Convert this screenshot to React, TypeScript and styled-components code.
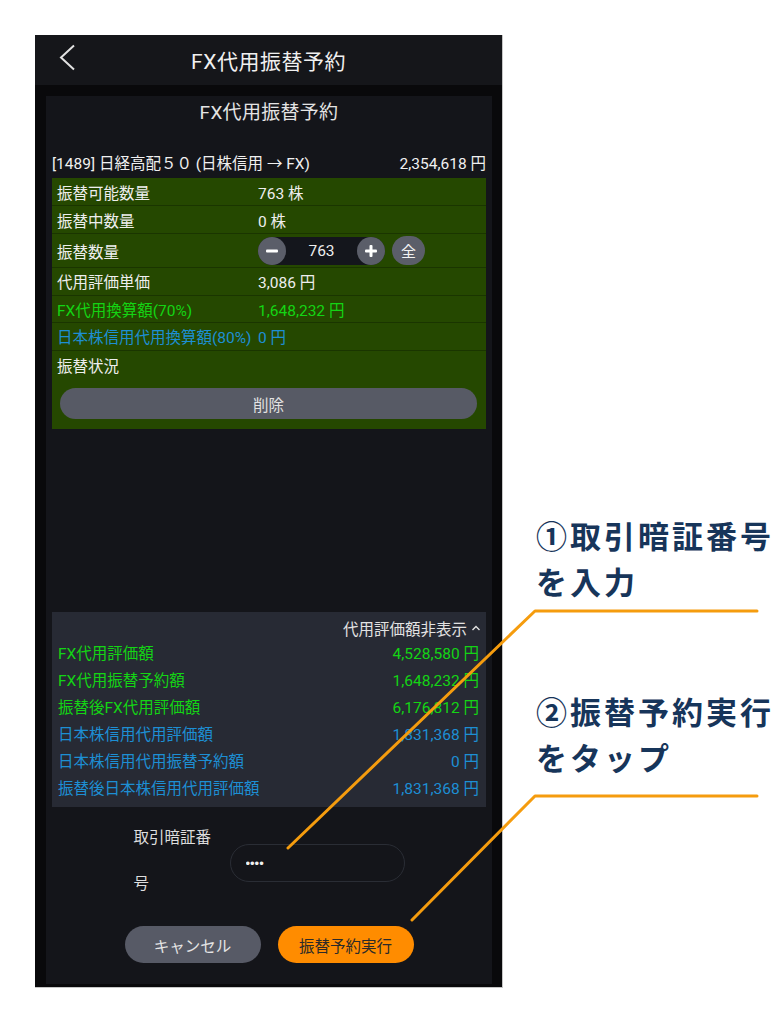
import React from "react";
import styled, { createGlobalStyle } from "styled-components";

const GlobalStyle = createGlobalStyle`
  html, body {
    margin: 0;
    padding: 0;
    background: #ffffff;
  }
  body {
    font-family: Roboto, "Noto Sans CJK JP", sans-serif;
  }
  * {
    box-sizing: border-box;
  }
`;

const GREEN = "#14d414";
const BLUE = "#1d8fd4";

const Page = styled.div`
  position: relative;
  display: flex;
  align-items: flex-start;
  width: 780px;
  min-height: 1024px;
  padding: 35px 0 0 35px;
`;

/* ---------- phone ---------- */

const Phone = styled.div`
  width: 468px;
  display: flex;
  flex-direction: column;
  border-right: 1px solid #c6c6c6;
  border-bottom: 1px solid #c6c6c6;
  background: #09090b;
`;

const Header = styled.header`
  height: 50px;
  display: grid;
  grid-template-columns: 1fr auto 1fr;
  align-items: center;
  background: #15161a;
`;

const BackButton = styled.button`
  justify-self: start;
  align-self: start;
  margin: 9px 0 0 24px;
  padding: 0;
  border: none;
  background: none;
  display: flex;
`;

const HeaderTitle = styled.h1`
  margin: 0;
  font-size: 21px;
  font-weight: 400;
  color: #f0f0f0;
  letter-spacing: 0.5px;
`;

const Body = styled.div`
  padding: 11px 10px 3px 11px;
`;

const Panel = styled.section`
  background: #14151a;
  padding: 0 6px 21px;
  display: flex;
  flex-direction: column;
`;

const PanelTitle = styled.h2`
  margin: 0;
  height: 34px;
  line-height: 34px;
  text-align: center;
  font-size: 19px;
  font-weight: 400;
  color: #e4e4e4;
  letter-spacing: 0.3px;
`;

const StockRow = styled.div`
  margin: 18px 0 2px;
  height: 28px;
  display: flex;
  justify-content: space-between;
  align-items: center;
  font-size: 15.5px;
  color: #f0f0f0;
`;

/* ---------- green detail table ---------- */

const DetailTable = styled.div`
  background: #254800;
  padding-bottom: 10px;
  display: flex;
  flex-direction: column;
`;

const Row = styled.div<{ $height?: number; $last?: boolean }>`
  display: grid;
  grid-template-columns: 201px 1fr;
  align-items: center;
  height: ${(p) => p.$height ?? 28}px;
  padding-left: 5px;
  border-bottom: ${(p) => (p.$last ? "none" : "1px solid #1a3500")};
`;

const Cell = styled.span<{ $tone?: "green" | "blue" }>`
  font-size: 15.5px;
  white-space: nowrap;
  color: ${(p) =>
    p.$tone === "green" ? GREEN : p.$tone === "blue" ? BLUE : "#eeeeee"};
`;

const Stepper = styled.div`
  display: flex;
  align-items: center;
  gap: 7px;
`;

const StepperTrack = styled.div`
  width: 127px;
  height: 28px;
  border-radius: 14px;
  background: #14161c;
  display: flex;
  align-items: center;
  justify-content: space-between;
`;

const RoundButton = styled.button`
  width: 28px;
  height: 28px;
  border-radius: 14px;
  border: none;
  padding: 0;
  background: #5b5e69;
  display: flex;
  align-items: center;
  justify-content: center;
`;

const StepperValue = styled.span`
  font-size: 15.5px;
  color: #eeeeee;
`;

const AllButton = styled.button`
  width: 33px;
  height: 29px;
  border-radius: 15px;
  border: none;
  padding: 0;
  background: #5b5e69;
  color: #f2f2f2;
  font-family: inherit;
  font-size: 15px;
`;

const DeleteButton = styled.button`
  margin: 8px 9px 0 8px;
  height: 31px;
  border-radius: 16px;
  border: none;
  background: #575a65;
  color: #e2e2e2;
  font-family: inherit;
  font-size: 15.5px;
`;

/* ---------- summary ---------- */

const Summary = styled.div`
  margin-top: 183px;
  background: #272a34;
  padding: 6px 7px 7px 6px;
`;

const SummaryToggle = styled.div`
  height: 20px;
  display: flex;
  justify-content: flex-end;
  align-items: center;
  gap: 4px;
  margin-right: -2px;
  font-size: 15.5px;
  color: #e2e2e2;
`;

const SummaryRow = styled.div<{ $tone: "green" | "blue" }>`
  height: 27px;
  display: flex;
  justify-content: space-between;
  align-items: center;
  font-size: 15.5px;
  color: ${(p) => (p.$tone === "green" ? GREEN : BLUE)};
`;

/* ---------- pin + actions ---------- */

const PinRow = styled.div`
  margin-top: 8px;
  display: flex;
  justify-content: center;
  align-items: center;
  gap: 11px;
`;

const PinLabel = styled.label`
  width: 85px;
  line-height: 46px;
  font-size: 15.5px;
  color: #dedede;
  word-break: break-all;
`;

const PinInput = styled.input`
  width: 175px;
  height: 38px;
  margin-top: 4px;
  border-radius: 19px;
  border: 1px solid #2a2d35;
  background: transparent;
  color: #f0f0f0;
  padding: 0 15px;
  font-size: 13px;
  outline: none;
`;

const Actions = styled.div`
  margin-top: 19px;
  display: flex;
  justify-content: center;
  gap: 17px;
`;

const ActionButton = styled.button<{ $primary?: boolean }>`
  width: 136px;
  height: 37px;
  border-radius: 19px;
  border: none;
  font-family: inherit;
  font-size: 15.5px;
  background: ${(p) => (p.$primary ? "#ff8c00" : "#575a66")};
  color: ${(p) => (p.$primary ? "#2a2a2a" : "#e4e4e4")};
`;

/* ---------- callouts ---------- */

const Notes = styled.div`
  margin-left: 33px;
  padding-top: 477px;
  display: flex;
  flex-direction: column;
  gap: 84px;
`;

const Note = styled.p`
  margin: 0;
  font-family: "Noto Sans CJK JP", sans-serif;
  font-weight: 700;
  font-size: 31px;
  line-height: 46px;
  letter-spacing: 3px;
  color: #17355a;
  white-space: nowrap;
`;

const Leaders = styled.svg`
  position: absolute;
  top: 0;
  left: 0;
  pointer-events: none;
`;

type Line = { label: string; value?: string; tone?: "green" | "blue" };

const details: Line[] = [
  { label: "振替可能数量", value: "763 株" },
  { label: "振替中数量", value: "0 株" },
];

const valuations: Line[] = [
  { label: "代用評価単価", value: "3,086 円" },
  { label: "FX代用換算額(70%)", value: "1,648,232 円", tone: "green" },
  { label: "日本株信用代用換算額(80%)", value: "0 円", tone: "blue" },
];

const totals: Line[] = [
  { label: "FX代用評価額", value: "4,528,580 円", tone: "green" },
  { label: "FX代用振替予約額", value: "1,648,232 円", tone: "green" },
  { label: "振替後FX代用評価額", value: "6,176,812 円", tone: "green" },
  { label: "日本株信用代用評価額", value: "1,831,368 円", tone: "blue" },
  { label: "日本株信用代用振替予約額", value: "0 円", tone: "blue" },
  { label: "振替後日本株信用代用評価額", value: "1,831,368 円", tone: "blue" },
];

const MinusIcon = () => (
  <svg width="14" height="14" viewBox="0 0 14 14">
    <rect x="1" y="5.5" width="12" height="3" rx="1" fill="#ffffff" />
  </svg>
);

const PlusIcon = () => (
  <svg width="14" height="14" viewBox="0 0 14 14">
    <rect x="1" y="5.5" width="12" height="3" rx="1" fill="#ffffff" />
    <rect x="5.5" y="1" width="3" height="12" rx="1" fill="#ffffff" />
  </svg>
);

export default function App() {
  return (
    <>
      <GlobalStyle />
      <Page>
        <Phone>
          <Header>
            <BackButton aria-label="戻る">
              <svg width="18" height="28" viewBox="0 0 18 28">
                <polyline
                  points="15,1.5 2,13.5 15,25.5"
                  fill="none"
                  stroke="#e2e2e2"
                  strokeWidth="2"
                />
              </svg>
            </BackButton>
            <HeaderTitle>FX代用振替予約</HeaderTitle>
            <span />
          </Header>

          <Body>
            <Panel>
              <PanelTitle>FX代用振替予約</PanelTitle>
              <StockRow>
                <span>[1489] 日経高配５０ (日株信用 → FX)</span>
                <span>2,354,618 円</span>
              </StockRow>

              <DetailTable>
                {details.map((d) => (
                  <Row key={d.label}>
                    <Cell>{d.label}</Cell>
                    <Cell>{d.value}</Cell>
                  </Row>
                ))}
                <Row $height={34}>
                  <Cell>振替数量</Cell>
                  <Stepper>
                    <StepperTrack>
                      <RoundButton aria-label="減らす">
                        <MinusIcon />
                      </RoundButton>
                      <StepperValue>763</StepperValue>
                      <RoundButton aria-label="増やす">
                        <PlusIcon />
                      </RoundButton>
                    </StepperTrack>
                    <AllButton>全</AllButton>
                  </Stepper>
                </Row>
                {valuations.map((d) => (
                  <Row key={d.label} $height={27.5}>
                    <Cell $tone={d.tone}>{d.label}</Cell>
                    <Cell $tone={d.tone}>{d.value}</Cell>
                  </Row>
                ))}
                <Row $last $height={29.5}>
                  <Cell>振替状況</Cell>
                  <span />
                </Row>
                <DeleteButton>削除</DeleteButton>
              </DetailTable>

              <Summary>
                <SummaryToggle>
                  代用評価額非表示
                  <svg width="10" height="8" viewBox="0 0 10 8">
                    <polyline
                      points="1.5,6 5,2.5 8.5,6"
                      fill="none"
                      stroke="#e2e2e2"
                      strokeWidth="1.4"
                    />
                  </svg>
                </SummaryToggle>
                {totals.map((t) => (
                  <SummaryRow key={t.label} $tone={t.tone ?? "green"}>
                    <span>{t.label}</span>
                    <span>{t.value}</span>
                  </SummaryRow>
                ))}
              </Summary>

              <PinRow>
                <PinLabel htmlFor="pin">取引暗証番号</PinLabel>
                <PinInput id="pin" type="password" defaultValue="1234" readOnly />
              </PinRow>

              <Actions>
                <ActionButton>キャンセル</ActionButton>
                <ActionButton $primary>振替予約実行</ActionButton>
              </Actions>
            </Panel>
          </Body>
        </Phone>

        <Notes>
          <Note>
            ①取引暗証番号
            <br />
            を入力
          </Note>
          <Note>
            ②振替予約実行
            <br />
            をタップ
          </Note>
        </Notes>

        <Leaders width="780" height="1024" viewBox="0 0 780 1024">
          <polyline
            points="757,611 535,611 288,848"
            fill="none"
            stroke="#f59c0e"
            strokeWidth="3"
            strokeLinecap="round"
            strokeLinejoin="round"
          />
          <polyline
            points="757,796 535,796 412,920"
            fill="none"
            stroke="#f59c0e"
            strokeWidth="3"
            strokeLinecap="round"
            strokeLinejoin="round"
          />
        </Leaders>
      </Page>
    </>
  );
}
